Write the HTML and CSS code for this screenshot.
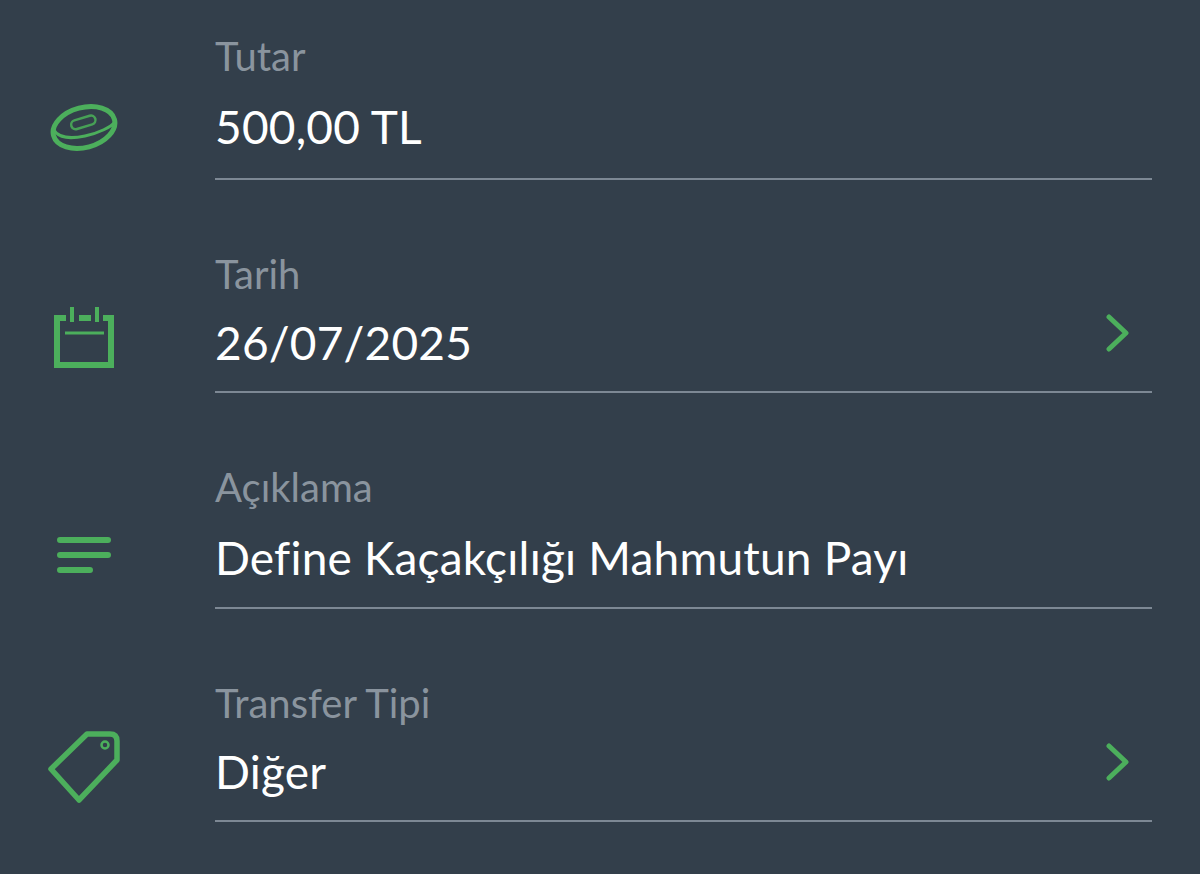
FILE: index.html
```html
<!DOCTYPE html>
<html lang="tr">
<head>
  <meta charset="UTF-8">
  <meta name="viewport" content="width=device-width, initial-scale=1.0">
  <title>Transfer</title>
  <link rel="stylesheet" href="styles.css">
</head>
<body>
  <div class="form">
    <div class="row">
      <div class="icon">
        <svg class="icon-coin" width="70" height="52" viewBox="0 0 70 52" fill="none" stroke="#4caf5c" stroke-width="5">
          <ellipse cx="35" cy="25.5" rx="31.5" ry="20" transform="rotate(-15 35 25.5)"/>
          <path d="M4 27C10 37 22 37 36 34C50 31 62 25 66 20" stroke-width="3"/>
          <rect x="22" y="16" width="25" height="9" rx="4.5" transform="rotate(-17 34 21)" stroke="#47a056" stroke-width="2.5"/>
        </svg>
      </div>
      <div class="field field-first">
        <div class="label">Tutar</div>
        <div class="value-row"><span class="value">500,00 TL</span></div>
      </div>
    </div>
    <div class="row">
      <div class="icon">
        <svg class="icon-calendar" width="60" height="61" viewBox="0 0 60 61" fill="none" stroke="#4caf5c" stroke-width="6">
          <path d="M12 11H3V58H57V11H49M25 11H37"/>
          <path d="M18 0V15M43 0V15" stroke-width="4"/>
          <path d="M11 26H50" stroke-width="3"/>
        </svg>
      </div>
      <div class="field">
        <div class="label">Tarih</div>
        <div class="value-row">
          <span class="value">26/07/2025</span>
          <svg class="chevron" width="24" height="38" viewBox="0 0 24 38" fill="none" stroke="#4caf5c" stroke-width="5" stroke-linecap="round" stroke-linejoin="round">
            <path d="M3 3L20 19L3 35"/>
          </svg>
        </div>
      </div>
    </div>
    <div class="row">
      <div class="icon">
        <svg class="icon-lines" width="54" height="36" viewBox="0 0 54 36" fill="none" stroke="#4caf5c" stroke-width="6" stroke-linecap="round">
          <path d="M3 3H51M3 18H51M3 33H33"/>
        </svg>
      </div>
      <div class="field field-desc">
        <div class="label">Açıklama</div>
        <div class="value-row"><span class="value">Define Kaçakçılığı Mahmutun Payı</span></div>
      </div>
    </div>
    <div class="row">
      <div class="icon">
        <svg width="74" height="74" viewBox="0 0 74 74" fill="none" stroke="#4caf5c" stroke-width="5.5" stroke-linejoin="round">
          <path d="M4 39L40 4H63Q70 4 70 11V30L32 70Z"/>
          <circle cx="58" cy="15" r="3.5" stroke-width="2.5"/>
        </svg>
      </div>
      <div class="field">
        <div class="label">Transfer Tipi</div>
        <div class="value-row">
          <span class="value">Diğer</span>
          <svg class="chevron" width="24" height="38" viewBox="0 0 24 38" fill="none" stroke="#4caf5c" stroke-width="5" stroke-linecap="round" stroke-linejoin="round">
            <path d="M3 3L20 19L3 35"/>
          </svg>
        </div>
      </div>
    </div>
  </div>
</body>
</html>
```

FILE: styles.css
```css
body {
  margin: 0;
  background-color: #333f4b;
  font-family: Lato, "Noto Sans", sans-serif;
  color: #fff;
  overflow: hidden;
}

.form {
  padding: 33px 48px 0 0;
  display: flex;
  flex-direction: column;
  gap: 71px;
}

.row {
  display: flex;
  align-items: flex-end;
}

.icon {
  width: 168px;
  margin-right: 47px;
  height: 110px;
  display: flex;
  align-items: center;
  justify-content: center;
  flex-shrink: 0;
}

.icon-coin {
  margin-top: 6px;
}

.icon-calendar {
  margin-bottom: 2px;
}

.icon-lines {
  margin-top: 2px;
}

.field {
  flex: 1;
  border-bottom: 2px solid #7d8894;
  height: 142px;
  box-sizing: border-box;
}

.field-first {
  height: 147px;
}

.field-desc {
  height: 145px;
}

.label {
  font-size: 40px;
  line-height: 46px;
  color: #8a949e;
}

.value-row {
  display: flex;
  justify-content: space-between;
  align-items: center;
  height: 60px;
  margin-top: 15px;
  padding-right: 22px;
}

.field-first .value-row,
.field-desc .value-row {
  margin-top: 17px;
}

.value {
  font-size: 46px;
  letter-spacing: 0.2px;
}

.chevron {
  margin-top: -19px;
}
```
